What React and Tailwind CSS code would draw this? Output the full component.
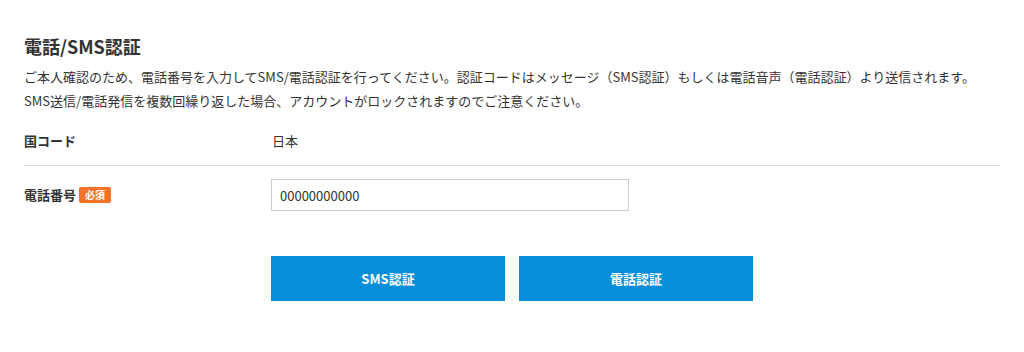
import React from "react";

export default function App() {
  const font = { fontFamily: '"Noto Sans CJK JP", "Noto Sans", sans-serif' };
  return (
    <div className="w-[1024px] h-[352px] bg-white text-[#333]" style={font}>
      <div className="px-6 pt-[33px]">
        <h2 className="text-[18px] leading-[26px] font-bold text-[#333]">電話/SMS認証</h2>
        <p className="mt-[6px] text-[13px] leading-[24px] text-[#333]">
          ご本人確認のため、電話番号を入力してSMS/電話認証を行ってください。認証コードはメッセージ（SMS認証）もしくは電話音声（電話認証）より送信されます。
          <br />
          SMS送信/電話発信を複数回繰り返した場合、アカウントがロックされますのでご注意ください。
        </p>
        <div className="w-[976px] mt-[16px] pb-[12px] border-b border-[#dcdcdc] flex items-center text-[13px] leading-[24px]">
          <div className="w-[248px] font-bold">国コード</div>
          <div>日本</div>
        </div>
        <div className="w-[976px] pt-[13px] flex items-center text-[13px]">
          <div className="w-[247px] flex items-center font-bold">
            <span>電話番号</span>
            <span className="ml-[3px] bg-[#f47327] text-white text-[10px] leading-[16px] px-[6px] rounded-[2px] font-bold">必須</span>
          </div>
          <input
            className="w-[358px] h-[32px] border border-[#cccccc] px-[8px] text-[13px] text-[#333] outline-none"
            style={font}
            defaultValue="00000000000"
            readOnly
          />
        </div>
        <div className="mt-[45px] ml-[247px] flex gap-[14px]">
          <button className="w-[234px] h-[45px] bg-[#068fd9] text-white text-[13px] font-bold">SMS認証</button>
          <button className="w-[234px] h-[45px] bg-[#068fd9] text-white text-[13px] font-bold">電話認証</button>
        </div>
      </div>
    </div>
  );
}
